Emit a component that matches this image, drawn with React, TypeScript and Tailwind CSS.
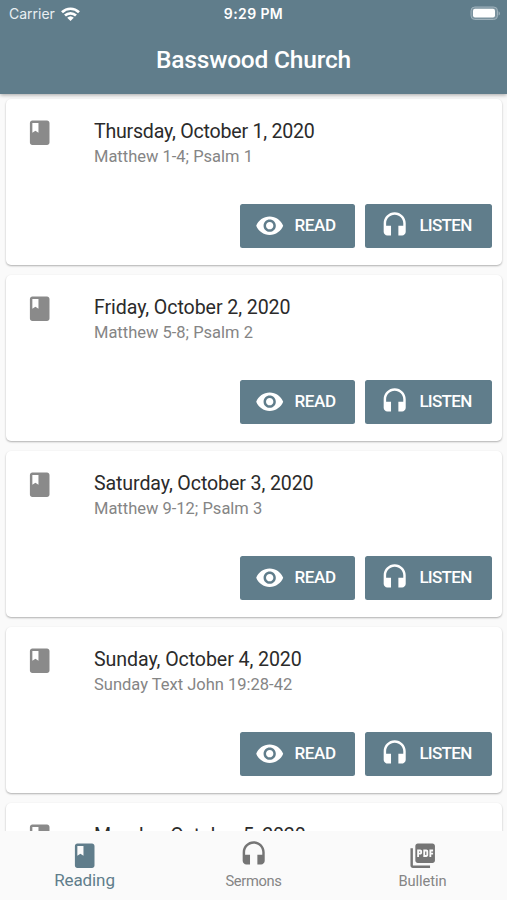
import React from "react";

type IconProps = { d: string; className?: string };

function Icon({ d, className = "" }: IconProps) {
  return (
    <svg viewBox="0 0 24 24" fill="currentColor" className={`size-[29.4px] shrink-0 ${className}`}>
      <path d={d} />
    </svg>
  );
}

const BOOK =
  "M18 2H6c-1.1 0-2 .9-2 2v16c0 1.1.9 2 2 2h12c1.1 0 2-.9 2-2V4c0-1.1-.9-2-2-2zM6 4h5v8l-2.5-1.5L6 12V4z";
const EYE =
  "M12 4.5C7 4.5 2.73 7.61 1 12c1.73 4.39 6 7.5 11 7.5s9.27-3.11 11-7.5c-1.73-4.39-6-7.5-11-7.5zM12 17c-2.76 0-5-2.24-5-5s2.24-5 5-5 5 2.24 5 5-2.24 5-5 5zm0-8c-1.66 0-3 1.34-3 3s1.34 3 3 3 3-1.34 3-3-1.34-3-3-3z";
const HEADSET =
  "M12 1c-4.97 0-9 4.03-9 9v7c0 1.66 1.34 3 3 3h3v-8H5v-2c0-3.87 3.13-7 7-7s7 3.13 7 7v2h-4v8h3c1.66 0 3-1.34 3-3v-7c0-4.97-4.03-9-9-9z";
const PDF =
  "M20 2H8c-1.1 0-2 .9-2 2v12c0 1.1.9 2 2 2h12c1.1 0 2-.9 2-2V4c0-1.1-.9-2-2-2zm-8.5 7.5c0 .83-.67 1.5-1.5 1.5H9v2H7.5V7H10c.83 0 1.5.67 1.5 1.5v1zm5 2c0 .83-.67 1.5-1.5 1.5h-2.5V7H15c.83 0 1.5.67 1.5 1.5v3zm4-3H19v1h1.5V11H19v2h-1.5V7h3v1.5zM9 9.5h1v-1H9v1zM4 6H2v14c0 1.1.9 2 2 2h14v-2H4V6zm10 5.5h1v-3h-1v3z";

const readings = [
  { date: "Thursday, October 1, 2020", text: "Matthew 1-4; Psalm 1", tracking: "tracking-[-0.23px]" },
  { date: "Friday, October 2, 2020", text: "Matthew 5-8; Psalm 2", tracking: "tracking-[-0.08px]" },
  { date: "Saturday, October 3, 2020", text: "Matthew 9-12; Psalm 3", tracking: "tracking-[-0.11px]" },
  { date: "Sunday, October 4, 2020", text: "Sunday Text John 19:28-42", tracking: "tracking-[-0.08px]" },
];

function CardHeading({ date, text, tracking }: { date: string; text?: string; tracking: string }) {
  return (
    <div className="flex">
      <Icon d={BOOK} className="-mt-[1px] ml-[19.3px] text-[#8a8a8a]" />
      <div className="ml-[39.3px] pt-[1px] whitespace-nowrap">
        <h2 className={`text-[19.6px] leading-6 text-[#2b2b2b] ${tracking}`}>{date}</h2>
        {text && <p className="text-[16.5px] leading-[26px] text-[#858585]">{text}</p>}
      </div>
    </div>
  );
}

function ReadingCard({ date, text, tracking }: { date: string; text: string; tracking: string }) {
  return (
    <article className="flex h-[166px] shrink-0 flex-col justify-between rounded-[5px] bg-white pt-5 pr-[10px] pb-[17px] shadow-[0_1px_2px_rgba(0,0,0,0.3)]">
      <CardHeading date={date} text={text} tracking={tracking} />
      <div className="flex justify-end gap-[10px] text-[17px] font-medium text-white">
        <button className="flex h-11 w-[115px] items-center gap-[10px] rounded-[2.5px] bg-[#607d8b] pl-[15px]">
          <Icon d={EYE} />
          <span className="tracking-[-0.35px]">READ</span>
        </button>
        <button className="flex h-11 w-[127px] items-center gap-[10px] rounded-[2.5px] bg-[#607d8b] pl-[15px]">
          <Icon d={HEADSET} />
          <span className="tracking-[-0.7px]">LISTEN</span>
        </button>
      </div>
    </article>
  );
}

export default function App() {
  return (
    <div className="flex h-[900px] w-[507px] flex-col overflow-hidden bg-[#fafafa] font-['Roboto','Liberation_Sans',sans-serif]">
      <header className="z-10 flex h-[94px] shrink-0 flex-col bg-[#607d8b] text-white shadow-[0_1px_4px_rgba(0,0,0,0.35)]">
        <div className="grid h-[27px] grid-cols-3 items-center pr-[7px] pl-[9px] font-['Inter',sans-serif] text-[14px]">
          <div className="flex items-center gap-[6px] text-[#e9eff2]">
            <span>Carrier</span>
            <svg viewBox="0 0 19 14" className="h-[14px] w-[19px]" fill="none" stroke="white" strokeWidth="2.7">
              <path d="M1 5.2a12.2 12.2 0 0 1 17 0" />
              <path d="M4 8.6a8 8 0 0 1 11 0" />
              <path d="M9.5 14 6.2 10.8a4.8 4.8 0 0 1 6.6 0Z" fill="white" stroke="none" />
            </svg>
          </div>
          <span className="-ml-[2px] text-center font-semibold tracking-[0.4px]">9:29 PM</span>
          <svg viewBox="0 0 31 15" className="h-[15px] w-[31px] justify-self-end">
            <rect x="2" y="1" width="26.5" height="12.5" rx="3.8" fill="#7b939f" stroke="#9fb2bc" strokeWidth="1" />
            <rect x="4" y="2.8" width="22" height="8.8" rx="2" fill="white" />
            <path d="M29.6 5.2c1.6.8 1.6 3.6 0 4.4Z" fill="#a5b7c0" />
          </svg>
        </div>
        <h1 className="pt-[17px] text-center text-[24.5px] leading-8 font-medium tracking-[-0.2px]">Basswood Church</h1>
      </header>

      <main className="flex min-h-0 flex-1 flex-col gap-[10px] overflow-hidden pt-[5px] pr-[5px] pl-[6px]">
        {readings.map((r) => (
          <ReadingCard key={r.date} {...r} />
        ))}
        <article className="h-[60px] shrink-0 rounded-t-[5px] bg-white pt-5 shadow-[0_1px_2px_rgba(0,0,0,0.3)]">
          <CardHeading date="Monday, October 5, 2020" tracking="tracking-[-0.17px]" />
        </article>
      </main>

      <nav className="grid h-[69px] shrink-0 grid-cols-3 bg-[#fafafa] text-[#757575]">
        <div className="flex flex-col items-center pt-[10px] text-[#607d8b]">
          <Icon d={BOOK} />
          <span className="text-[17px] leading-[20px] tracking-[-0.1px]">Reading</span>
        </div>
        <div className="flex flex-col items-center pt-[9px]">
          <Icon d={HEADSET} />
          <span className="pt-[1px] text-[14.7px] leading-[23px] tracking-[-0.35px] text-[#858585]">Sermons</span>
        </div>
        <div className="flex flex-col items-center pt-[10px]">
          <Icon d={PDF} />
          <span className="text-[14.7px] leading-[23px] tracking-[-0.1px] text-[#858585]">Bulletin</span>
        </div>
      </nav>
    </div>
  );
}
